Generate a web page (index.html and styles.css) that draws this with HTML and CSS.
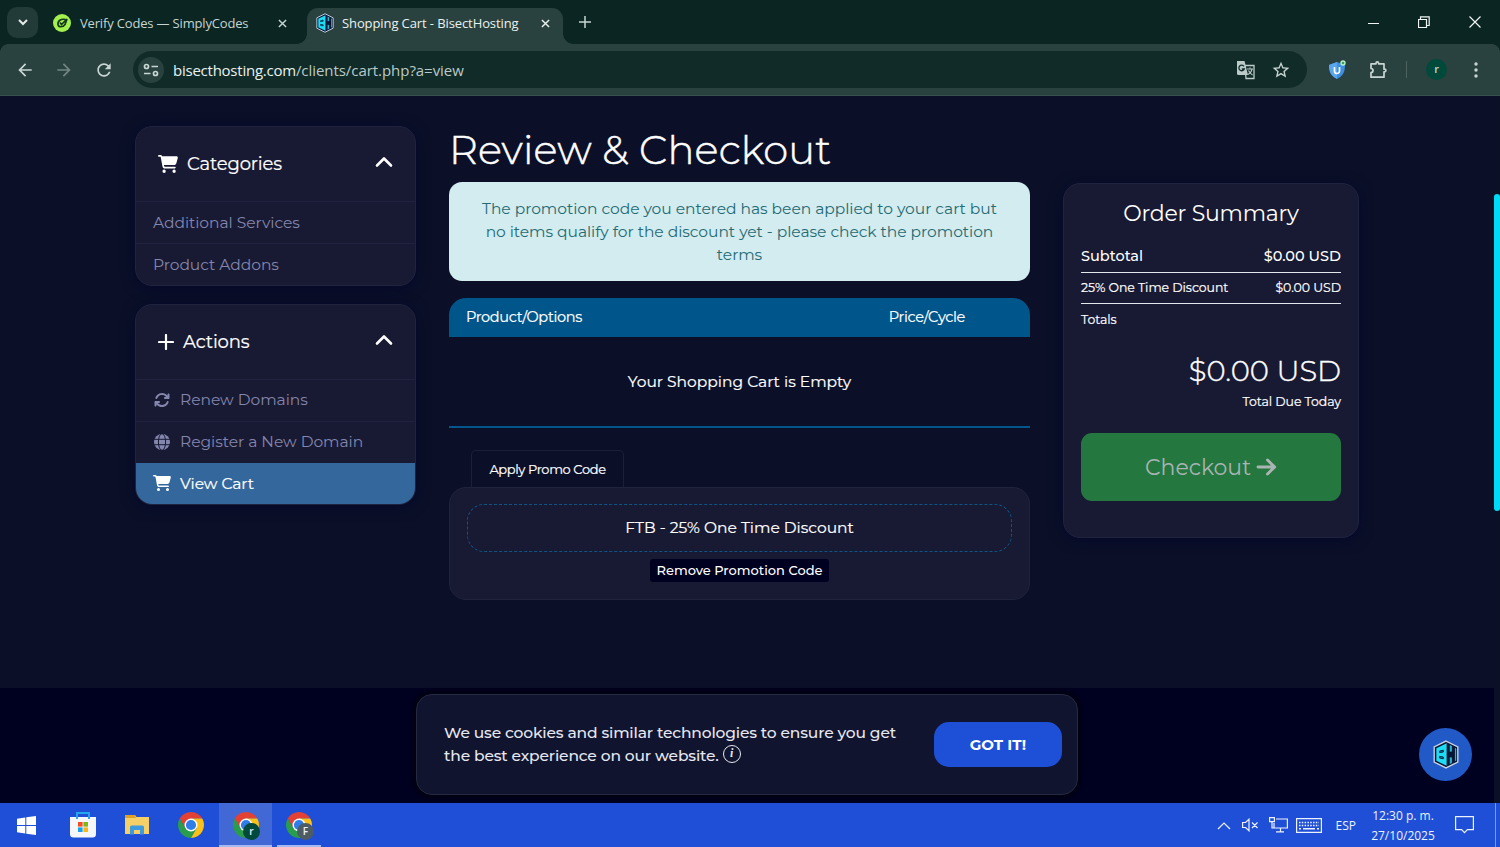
FILE: index.html
```html
<!DOCTYPE html>
<html lang="en">
<head>
    <meta charset="UTF-8">
    <meta name="viewport" content="width=device-width, initial-scale=1.0">
    <title>Shopping Cart - BisectHosting</title>
    <link rel="stylesheet" href="styles.css">
</head>
<body>
    <svg class="sprite" aria-hidden="true">
        <symbol id="cart" viewBox="0 0 576 512"><path d="M0 24C0 10.7 10.7 0 24 0H69.5c22 0 41.5 12.8 50.6 32h411c26.3 0 45.5 25 38.6 50.4l-41 152.3c-8.5 31.4-37 53.3-69.5 53.3H170.7l5.4 28.5c2.2 11.3 12.1 19.5 23.6 19.5H488c13.3 0 24 10.7 24 24s-10.7 24-24 24H199.7c-34.6 0-64.3-24.6-70.7-58.5L77.4 54.5c-.7-3.8-4-6.5-7.9-6.5H24C10.7 48 0 37.3 0 24zM128 464a48 48 0 1 1 96 0 48 48 0 1 1 -96 0zm336-48a48 48 0 1 1 0 96 48 48 0 1 1 0-96z"/></symbol>
        <symbol id="chevron" viewBox="0 0 18 12"><path d="M2 9.5l7-7 7 7" fill="none" stroke="currentColor" stroke-width="2.6" stroke-linecap="round" stroke-linejoin="round"/></symbol>
        <symbol id="close" viewBox="0 0 10 10"><path d="M1 1l8 8M9 1L1 9" fill="none" stroke="currentColor" stroke-width="1.6"/></symbol>
        <symbol id="back" viewBox="0 0 24 24"><path d="M20 11H7.83l5.59-5.59L12 4l-8 8 8 8 1.41-1.41L7.83 13H20v-2z"/></symbol>
        <symbol id="bisect" viewBox="0 0 24 27">
            <path d="M12 1l11 5.5v14L12 26 1 20.5v-14z" fill="#081634" stroke="#c4cfe0" stroke-width="1.3"/>
            <path d="M12.6 3L3 7.6v11.8l9.600 4.600z" fill="#1fdcf6"/>
            <path d="M6 10.300l3.500-.8v1.700l-3.500.5zM6 15.300l3.500.5v1.700L6 16.800z" fill="#1a6f90" stroke="#081634" stroke-width=".8"/>
            <path d="M15.500 4.700l2 1v5l-2 .3zM15.500 22.300l2-1v-5l-2-.3zM20.300 7.300l1.200.6v11.200l-1.200.6z" fill="#1fb6d6"/>
        </symbol>
        <symbol id="chrome" viewBox="0 0 24 24">
            <path d="M1.61 6A12 12 0 0 1 22.39 6H12L6.8 15z" fill="#e34133"/>
            <path d="M1.61 6A12 12 0 0 0 12 24l5.2-9H6.8z" fill="#2a9d4c"/>
            <path d="M12 24A12 12 0 0 0 22.39 6H12l5.2 9z" fill="#fbc116"/>
            <circle cx="12" cy="12" r="6" fill="#fff"/>
            <circle cx="12" cy="12" r="4.7" fill="#2f7de9"/>
        </symbol>
    </svg>

    <div class="tabs">
        <div class="tab-search"><svg width="10" height="7" viewBox="0 0 10 7"><path d="M1 1l4 4 4-4" fill="none" stroke="currentColor" stroke-width="2"/></svg></div>
        <div class="tab">
            <svg class="favicon" width="18" height="18" viewBox="0 0 18 18"><circle cx="9" cy="9" r="9" fill="#a3f04f"/><path d="M12.500 5.500C8 4.500 4.500 7 5 10.500c.5 3 5 3 7 0l2-5.500-5.500 5.500-1.500-2" fill="none" stroke="#123a1c" stroke-width="1.700"/></svg>
            <span class="tab-title verify">Verify Codes — SimplyCodes</span>
            <svg class="close" width="9" height="9"><use href="#close"/></svg>
        </div>
        <div class="tab active">
            <svg class="favicon" width="18" height="20"><use href="#bisect"/></svg>
            <span class="tab-title shopping">Shopping Cart - BisectHosting</span>
            <svg class="close" width="9" height="9"><use href="#close"/></svg>
        </div>
        <svg class="new-tab" width="12" height="12" viewBox="0 0 12 12"><path d="M6 0v12M0 6h12" stroke="currentColor" stroke-width="1.500"/></svg>
        <div class="window-buttons">
            <svg width="12" height="12" viewBox="0 0 12 12"><path d="M1 7.500h11" stroke="currentColor"/></svg>
            <svg width="12" height="12" viewBox="0 0 12 12"><path d="M.5 3.500h8v8h-8zM2.500 3V.8h8.700v8.700H9" fill="none" stroke="currentColor" stroke-width="1.200"/></svg>
            <svg width="12" height="12" viewBox="0 0 12 12"><path d="M.5.5l11 11M11.500.5l-11 11" stroke="currentColor" stroke-width="1.200"/></svg>
        </div>
    </div>

    <div class="toolbar">
        <svg class="nav-icon" width="20" height="20"><use href="#back"/></svg>
        <svg class="nav-icon forward" width="20" height="20"><use href="#back"/></svg>
        <svg class="nav-icon" width="20" height="20" viewBox="0 0 24 24"><path d="M17.650 6.350C16.200 4.900 14.210 4 12 4c-4.420 0-7.990 3.580-7.990 8s3.570 8 7.990 8c3.730 0 6.840-2.550 7.730-6h-2.080c-.82 2.330-3.040 4-5.650 4-3.310 0-6-2.690-6-6s2.690-6 6-6c1.660 0 3.140.69 4.220 1.780L13 11h7V4l-2.350 2.350z"/></svg>
        <div class="omnibox">
            <div class="site-info"><svg width="16" height="14" viewBox="0 0 16 14" stroke="currentColor" stroke-width="1.700"><circle cx="3.500" cy="3.500" r="2" fill="none"/><path d="M8.500 3.500H15M1 10.500h6.500"/><circle cx="12.500" cy="10.500" r="2" fill="none"/></svg></div>
            <div class="url"><span class="domain">bisecthosting.com</span>/clients/cart.php?a=view</div>
            <svg class="translate" width="20" height="20" viewBox="0 0 20 20">
                <path d="M9 5.500h9v13h-8z" fill="none" stroke="#bccbc8" stroke-width="1.300"/>
                <path d="M1 1h7.500l3.500 14H2.500A1.500 1.500 0 0 1 1 13.500z" fill="#bccbc8"/>
                <path d="M8 6.300A2.800 2.800 0 1 0 8.300 9H5.800" fill="none" stroke="#112b29" stroke-width="1.300"/>
                <path d="M11 9h6M14 7.500V9M16 9c-.5 3-2 4.500-4 5.500M12.500 10.500c1 2 2.500 3.500 4 4.500" fill="none" stroke="#bccbc8" stroke-width="1.100"/>
            </svg>
            <svg class="star" width="20" height="20" viewBox="0 0 24 24"><path d="M22 9.240l-7.190-.62L12 2 9.190 8.630 2 9.240l5.460 4.730L5.820 21 12 17.270 18.180 21l-1.630-7.030L22 9.240zM12 15.400l-3.760 2.270 1-4.280-3.320-2.880 4.380-.38L12 6.100l1.710 4.040 4.380.38-3.320 2.880 1 4.280L12 15.400z"/></svg>
        </div>
        <svg class="shield" width="18" height="20" viewBox="0 0 18 20"><path d="M8 2l8 3c0 7-2 11-8 14C2 16 0 12 0 5z" fill="#3f8fe0"/><path d="M8 2v17C2 16 0 12 0 5z" fill="#5aa7ee"/><path d="M5.500 7v4a2.500 2.500 0 0 0 5 0V7" fill="none" stroke="#fff" stroke-width="1.700"/><circle cx="14" cy="3" r="2.700" fill="#b7efc9"/><circle cx="14" cy="3" r="1.300" fill="#37a067"/></svg>
        <svg class="puzzle" width="20" height="20" viewBox="0 0 20 20"><path d="M3 3.800h5v-.6a1.300 1.300 0 0 1 2.600 0v.6H16v5.400h.6a1.300 1.300 0 0 1 0 2.600H16v5.400H3v-4.700a2 2 0 0 0 0-4z" fill="none" stroke="currentColor" stroke-width="1.700" stroke-linejoin="round"/></svg>
        <span class="divider"></span>
        <span class="profile">r</span>
        <svg class="more" width="4" height="16" viewBox="0 0 4 16"><circle cx="2" cy="2" r="1.700"/><circle cx="2" cy="8" r="1.700"/><circle cx="2" cy="14" r="1.700"/></svg>
    </div>

    <div class="page">
        <main class="content">
            <aside class="sidebar">
                <div class="card">
                    <div class="card-header">
                        <svg width="20" height="18"><use href="#cart"/></svg>
                        <span class="card-title categories">Categories</span>
                        <svg class="toggle" width="18" height="12"><use href="#chevron"/></svg>
                    </div>
                    <a class="item services">Additional Services</a>
                    <a class="item addons">Product Addons</a>
                </div>
                <div class="card">
                    <div class="card-header">
                        <svg width="16" height="16" viewBox="0 0 16 16"><path d="M8 1v14M1 8h14" stroke="currentColor" stroke-width="2.200" stroke-linecap="round"/></svg>
                        <span class="card-title">Actions</span>
                        <svg class="toggle" width="18" height="12"><use href="#chevron"/></svg>
                    </div>
                    <a class="item action">
                        <svg width="18" height="16" viewBox="0 0 512 512"><path d="M105.100 202.600c7.700-21.800 20.200-42.300 37.800-59.800c62.500-62.500 163.800-62.500 226.300 0L386.300 160H352c-17.700 0-32 14.300-32 32s14.300 32 32 32H463.900c17.700 0 32-14.300 32-32V80c0-17.700-14.300-32-32-32s-32 14.300-32 32v35.200L414.400 97.600c-87.500-87.500-229.300-87.500-316.800 0C73.200 122 55.600 150.700 44.800 181.400c-5.900 16.700 2.900 34.900 19.500 40.800s34.900-2.900 40.800-19.500zM39 289.300c-5 1.500-9.800 4.200-13.700 8.200c-4 4-6.700 8.800-8.100 14c-.3 1.200-.6 2.500-.8 3.800c-.3 1.700-.4 3.400-.4 5.100V432c0 17.700 14.300 32 32 32s32-14.300 32-32V396.900l17.600 17.500c87.500 87.400 229.300 87.400 316.700 0c24.400-24.400 42.100-53.100 52.900-83.700c5.900-16.700-2.900-34.900-19.500-40.800s-34.900 2.900-40.800 19.500c-7.700 21.800-20.200 42.300-37.800 59.800c-62.500 62.500-163.800 62.500-226.300 0L125.600 352H160c17.700 0 32-14.300 32-32s-14.300-32-32-32H48.400z"/></svg>
                        Renew Domains
                    </a>
                    <a class="item action">
                        <svg width="18" height="16" viewBox="0 0 16 16"><circle cx="8" cy="8" r="8"/><path d="M0 5.300h16M0 10.700h16" stroke="#181a33"/><ellipse cx="8" cy="8" rx="3.600" ry="8.300" fill="none" stroke="#181a33"/></svg>
                        Register a New Domain
                    </a>
                    <a class="item action selected">
                        <svg width="18" height="16"><use href="#cart"/></svg>
                        View Cart
                    </a>
                </div>
            </aside>

            <section class="checkout">
                <h1>Review &amp; Checkout</h1>
                <div class="alert">
                    <span>The promotion code you entered has been applied to your cart but</span><br>
                    <span>no items qualify for the discount yet - please check the promotion</span><br>
                    <span>terms</span>
                </div>
                <div class="table-header">
                    <span>Product/Options</span>
                    <span>Price/Cycle</span>
                </div>
                <div class="empty">Your Shopping Cart is Empty</div>
                <div class="promo-tab">Apply Promo Code</div>
                <div class="promo">
                    <div class="promo-code">FTB - 25% One Time Discount</div>
                    <a class="remove">Remove Promotion Code</a>
                </div>
            </section>

            <aside class="summary">
                <h2>Order Summary</h2>
                <div class="row subtotal"><span>Subtotal</span><span>$0.00 USD</span></div>
                <div class="row discount"><span>25% One Time Discount</span><span>$0.00 USD</span></div>
                <div class="row"><span>Totals</span></div>
                <div class="amount">$0.00 USD</div>
                <div class="due">Total Due Today</div>
                <a class="checkout-button">
                    <span>Checkout</span>
                    <svg width="21" height="20" viewBox="0 0 21 20"><path d="M2 10h16.500M11.500 3l7.200 7-7.200 7" fill="none" stroke="currentColor" stroke-width="2.900" stroke-linecap="round" stroke-linejoin="round"/></svg>
                </a>
            </aside>
        </main>
        <footer></footer>

        <div class="scrollbar"></div>
        <div class="cookies">
            <p><span>We use cookies and similar technologies to ensure you get</span><br><span>the best experience on our website.</span> <span class="info">i</span></p>
            <a class="got-it">GOT IT!</a>
        </div>
        <div class="chat"><svg width="26" height="29"><use href="#bisect"/></svg></div>
    </div>

    <div class="taskbar">
        <div class="task start"><svg width="19" height="19" viewBox="0 0 19 19"><path d="M0 2.800l8.300-1.300v7.600H0zM9.300 1.300L19 0v9.100H9.300zM0 10h8.300v7.600L0 16.300zM9.300 10H19v9l-9.700-1.300z" fill="#fff"/></svg></div>
        <div class="task"><svg width="26" height="26" viewBox="0 0 26 26"><path d="M0 5h26v17a3.500 3.500 0 0 1-3.500 3.500h-19A3.500 3.500 0 0 1 0 22z" fill="#f4f6fa"/><path d="M7 7V1h12v6" fill="none" stroke="#23a6ee" stroke-width="2"/><path d="M8 10h4.600v4.600H8z" fill="#f04e27"/><path d="M13.400 10H18v4.600h-4.600z" fill="#7cb816"/><path d="M8 15.400h4.600V20H8z" fill="#1ba1e8"/><path d="M13.400 15.400H18V20h-4.600z" fill="#fcb714"/></svg></div>
        <div class="task"><svg width="24" height="20" viewBox="0 0 24 20"><path d="M0 0h10l1.500 2H24v17H0z" fill="#f6d067"/><path d="M0 0h10l1 3H0z" fill="#e0a224"/><path d="M5 19.500V12a1.500 1.500 0 0 1 1.500-1.500h11A1.500 1.500 0 0 1 19 12v7.500h-4V15H9v4.500z" fill="#3f9be0"/></svg></div>
        <div class="task"><svg width="26" height="26"><use href="#chrome"/></svg></div>
        <div class="task open current"><svg width="26" height="26"><use href="#chrome"/></svg><span class="user">r</span></div>
        <div class="task open"><svg width="26" height="26"><use href="#chrome"/></svg><span class="user gray">F</span></div>
        <div class="tray">
            <svg width="14" height="9" viewBox="0 0 14 9"><path d="M1 8l6-6 6 6" fill="none" stroke="currentColor" stroke-width="1.200"/></svg>
            <svg class="speaker" width="17" height="14" viewBox="0 0 17 14"><path d="M.6 4.500h3L7 1.200v11.600L3.600 9.500h-3zM10 4.500l5.500 5.500M15.500 4.500L10 10" fill="none" stroke="currentColor" stroke-width="1.200"/></svg>
            <svg class="network" width="19" height="16" viewBox="0 0 19 16"><path d="M7 2h11.400v9H5V6M11.500 11v3.500M7 14.800h8M.6.600h4.800v4H.6zM3 4.600V11h2" fill="none" stroke="currentColor" stroke-width="1.200"/></svg>
            <svg class="keyboard" width="26" height="15" viewBox="0 0 26 15"><path d="M.6.600h24.800v13.800H.6z" fill="none" stroke="currentColor" stroke-width="1.200"/><path d="M3 4.500h20M3 7.500h20" stroke="currentColor" stroke-width="1.500" stroke-dasharray="1.500 1.300"/><path d="M3 10.700h2M7 10.700h12M21 10.700h2" stroke="currentColor" stroke-width="1.500"/></svg>
            <span class="language">ESP</span>
            <div class="clock"><span>12:30 p. m.</span><span>27/10/2025</span></div>
            <svg class="notice" width="19" height="18" viewBox="0 0 19 18"><path d="M.6.600h17.800v13h-6L9.500 16.700l-2.900-3.100h-6z" fill="none" stroke="currentColor" stroke-width="1.200"/></svg>
            <span class="show-desktop"></span>
        </div>
    </div>
</body>
</html>
```

FILE: styles.css
```css
* {
    box-sizing: border-box;
}
body {
    margin: 0;
    height: 847px;
    overflow: hidden;
    display: flex;
    flex-direction: column;
    font-family: "Montserrat", "Inter", sans-serif;
    background-color: #0b1028;
    color: #fff;
}
svg {
    display: block;
    flex-shrink: 0;
    fill: currentColor;
}
span, a, h1, h2 {
    white-space: nowrap;
}
.sprite {
    position: absolute;
    width: 0;
    height: 0;
}

/* browser */
.tabs {
    height: 44px;
    display: flex;
    align-items: center;
    padding-left: 7px;
    background-color: #0a2522;
    color: #c5d5d2;
    font-family: "Open Sans", sans-serif;
    font-size: 13px;
}
.tab-search {
    width: 31px;
    height: 31px;
    border-radius: 10px;
    background-color: #233b38;
    display: flex;
    align-items: center;
    justify-content: center;
    color: #e2ecea;
}
.tab {
    width: 254px;
    height: 36px;
    margin-top: 8px;
    padding: 0 5px 6px 15px;
    display: flex;
    align-items: center;
}
.tab .close {
    margin-left: auto;
}
.tab-title {
    margin-left: 9px;
}
.verify {
    letter-spacing: -0.17px;
}
.shopping {
    letter-spacing: -0.1px;
}
.tab.active {
    position: relative;
    width: 256px;
    margin-left: 15px;
    padding-left: 9px;
    padding-right: 13px;
    border-radius: 11px 11px 0 0;
    background-color: #2a423f;
    color: #e8f2f0;
}
.tab.active .tab-title {
    margin-left: 8px;
}
.tab.active::before, .tab.active::after {
    content: "";
    position: absolute;
    bottom: 0;
    width: 10px;
    height: 10px;
}
.tab.active::before {
    left: -10px;
    background: radial-gradient(circle at 0 0, transparent 9.5px, #2a423f 10px);
}
.tab.active::after {
    right: -10px;
    background: radial-gradient(circle at 100% 0, transparent 9.5px, #2a423f 10px);
}
.new-tab {
    margin-left: 16px;
}
.window-buttons {
    margin-left: auto;
    margin-right: 19px;
    display: flex;
    gap: 39px;
    color: #f0f5f4;
}
.toolbar {
    height: 52px;
    display: flex;
    align-items: center;
    padding: 0 22px 0 15px;
    background: radial-gradient(circle at 8px 8px, #2a423f 7.5px, #0a2522 8px) 0 0 / 8px 8px no-repeat,
        radial-gradient(circle at 0 8px, #2a423f 7.5px, #0a2522 8px) 100% 0 / 8px 8px no-repeat,
        #2a423f;
    border-bottom: 1px solid #3a504d;
    color: #c8d6d3;
}
.nav-icon {
    margin-right: 20px;
}
.nav-icon:first-child {
    margin-right: 19px;
}
.nav-icon.forward {
    color: #728683;
    transform: scaleX(-1);
}
.omnibox {
    width: 1174px;
    height: 37px;
    margin-left: -1px;
    border-radius: 19px;
    background-color: #112b29;
    display: flex;
    align-items: center;
    padding: 0 16px 0 5px;
}
.site-info {
    width: 26px;
    height: 26px;
    border-radius: 50%;
    background-color: #2a423f;
    display: flex;
    align-items: center;
    justify-content: center;
}
.url {
    margin-left: 9px;
    font-family: "Open Sans", sans-serif;
    font-size: 15px;
    letter-spacing: -0.05px;
    color: #b9cac7;
}
.domain {
    letter-spacing: -0.24px;
    color: #e8f2f0;
}
.translate {
    margin-left: auto;
}
.star {
    margin-left: 15px;
}
.shield {
    margin-left: 22px;
}
.puzzle {
    margin-left: 21px;
}
.divider {
    width: 1px;
    height: 17px;
    margin-left: 18px;
    background-color: #4c635f;
}
.profile {
    width: 21px;
    height: 21px;
    margin-left: 19px;
    border-radius: 50%;
    background-color: #00493b;
    font: 600 11px/20px "Open Sans", sans-serif;
    text-align: center;
}
.more {
    margin-left: auto;
}

/* page */
.page {
    position: relative;
    height: 707px;
    display: flex;
    flex-direction: column;
}
.content {
    height: 592px;
    padding: 30px 0 0 135px;
    display: flex;
    align-items: flex-start;
    gap: 33px;
}
footer {
    flex: 1;
    background-color: #000020;
}
.sidebar {
    width: 281px;
    display: flex;
    flex-direction: column;
    gap: 18px;
}
.card, .summary {
    background-color: #181a33;
    border: 1px solid #20233d;
    border-radius: 17px;
    box-shadow: 0 2px 14px #05072a;
}
.card {
    overflow: hidden;
}
.card-header {
    height: 74px;
    padding: 0 22px;
    display: flex;
    align-items: center;
}
.card-title {
    margin-left: 9px;
    font-size: 18px;
    letter-spacing: -0.15px;
    -webkit-text-stroke: 0.2px;
}
.toggle {
    margin: 0 0 4px auto;
}
.item {
    height: 42px;
    padding-left: 17px;
    border-top: 1px solid #202340;
    display: flex;
    align-items: center;
    gap: 9px;
    color: #8486ad;
    font-size: 15.5px;
    letter-spacing: -0.04px;
}
.item.action {
    padding-bottom: 2px;
}
.item.selected {
    height: 41px;
    background-color: #34679b;
    border-color: #34679b;
    color: #fff;
    -webkit-text-stroke: 0.2px;
}

.checkout {
    width: 581px;
}
h1 {
    margin: 0;
    height: 56px;
    font-size: 40px;
    line-height: 48px;
    font-weight: 300;
    letter-spacing: 0.17px;
    -webkit-text-stroke: 0.5px;
}
.alert {
    height: 99px;
    padding: 15px 0;
    border-radius: 13px;
    background-color: #d2ecf0;
    color: #256a73;
    font-size: 15.5px;
    line-height: 23px;
    letter-spacing: -0.04px;
    text-align: center;
}
.table-header {
    height: 39px;
    margin-top: 17px;
    padding: 0 65px 1px 17px;
    border-radius: 17px 17px 0 0;
    background-color: #00558a;
    display: flex;
    align-items: center;
    justify-content: space-between;
    font-size: 14.5px;
    letter-spacing: -0.32px;
    -webkit-text-stroke: 0.2px;
}
.empty {
    height: 91px;
    padding-bottom: 1px;
    border-bottom: 2px solid #00558a;
    display: flex;
    align-items: center;
    justify-content: center;
    font-size: 15.5px;
    -webkit-text-stroke: 0.2px;
}
.promo-tab {
    width: 153px;
    height: 37px;
    margin: 22px 0 0 22px;
    border: 1px solid #1c1f38;
    border-bottom: none;
    border-radius: 5px 5px 0 0;
    display: flex;
    align-items: center;
    justify-content: center;
    font-size: 13px;
    letter-spacing: -0.37px;
    -webkit-text-stroke: 0.2px;
}
.promo {
    height: 113px;
    padding: 16px 17px;
    border: 1px solid #20233d;
    border-radius: 17px;
    background-color: #181a33;
    display: flex;
    flex-direction: column;
    align-items: center;
}
.promo-code {
    align-self: stretch;
    height: 48px;
    padding-bottom: 2px;
    border: 1px dashed #0b5687;
    border-radius: 17px;
    display: flex;
    align-items: center;
    justify-content: center;
    font-size: 15.5px;
    -webkit-text-stroke: 0.2px;
}
.remove {
    width: 179px;
    height: 23px;
    margin-top: 7px;
    border-radius: 3px;
    background-color: #000020;
    font-size: 13px;
    line-height: 23px;
    font-weight: 500;
    text-align: center;
}

.summary {
    width: 296px;
    height: 355px;
    margin-top: 57px;
    padding: 0 17px;
}
h2 {
    margin: 15px 0 0;
    font-size: 22px;
    line-height: 30px;
    font-weight: 400;
    letter-spacing: -0.23px;
    text-align: center;
}
.row {
    height: 31px;
    display: flex;
    align-items: center;
    justify-content: space-between;
    font-size: 12.5px;
    letter-spacing: -0.06px;
    -webkit-text-stroke: 0.2px;
}
.row:not(.subtotal) {
    padding-bottom: 1px;
}
.subtotal {
    height: 34px;
    margin-top: 10px;
    font-size: 14.5px;
    font-weight: 500;
    letter-spacing: 0;
    -webkit-text-stroke: 0;
}
.subtotal, .discount {
    border-bottom: 1px solid #e4e6ee;
}
.amount {
    margin-top: 18px;
    font-size: 29px;
    line-height: 36px;
    font-weight: 300;
    text-align: right;
    -webkit-text-stroke: 0.4px;
}
.due {
    margin-top: 5px;
    font-size: 12.5px;
    line-height: 16px;
    letter-spacing: -0.06px;
    text-align: right;
    -webkit-text-stroke: 0.2px;
}
.checkout-button {
    height: 68px;
    margin-top: 23px;
    border-radius: 11px;
    background-color: #24773f;
    color: #a9b4b3;
    display: flex;
    align-items: center;
    justify-content: center;
    gap: 5px;
    font-size: 22px;
}

/* overlays */
.scrollbar {
    position: absolute;
    right: 0;
    top: 0;
    width: 6px;
    height: 707px;
    background-color: #0c1027;
}
.scrollbar::before {
    content: "";
    display: block;
    height: 317px;
    margin-top: 98px;
    border-radius: 3px;
    background-color: #00d9f7;
}
.cookies {
    position: absolute;
    left: 416px;
    top: 598px;
    width: 662px;
    height: 101px;
    padding: 0 15px 0 27px;
    border: 1px solid #262942;
    border-radius: 16px;
    background-color: #11142e;
    box-shadow: 0 0 5px 2px #02030c;
    display: flex;
    align-items: center;
    justify-content: space-between;
    font-weight: 500;
    font-size: 15.5px;
    line-height: 23px;
    letter-spacing: -0.16px;
    color: #e6e8f2;
}
.cookies p {
    margin: 0 0 1px;
}
.info {
    display: inline-block;
    width: 18px;
    height: 18px;
    border: 1.5px solid #e6e8f2;
    border-radius: 50%;
    font: italic bold 12px/14px "Liberation Serif", serif;
    text-align: center;
    vertical-align: 4px;
}
.got-it {
    width: 128px;
    height: 45px;
    border-radius: 15px;
    background-color: #1d4fd7;
    color: #fff;
    font-weight: 700;
    font-size: 15px;
    line-height: 45px;
    letter-spacing: 0;
    text-align: center;
}
.chat {
    position: absolute;
    right: 28px;
    top: 632px;
    width: 53px;
    height: 53px;
    border-radius: 50%;
    background-color: #2159c7;
    display: flex;
    align-items: center;
    justify-content: center;
}

/* taskbar */
.taskbar {
    height: 44px;
    display: flex;
    background-color: #1e4fd6;
    font-family: "Open Sans", sans-serif;
    font-size: 12px;
    color: #edf2ff;
}
.task {
    position: relative;
    width: 54px;
    display: flex;
    align-items: center;
    justify-content: center;
}
.task.start {
    width: 53px;
    margin-right: 3px;
}
.task.open {
    border-bottom: 2px solid #a5b9f0;
    width: 44px;
    margin-left: 5px;
    padding-top: 2px;
}
.task.current {
    width: 53px;
    margin-left: 1px;
    background-color: #4168d5;
}
.user {
    position: absolute;
    left: 24px;
    top: 20px;
    width: 17px;
    height: 17px;
    border-radius: 50%;
    background-color: #00493b;
    font-size: 10px;
    font-weight: 600;
    line-height: 16px;
    text-align: center;
}
.user.gray {
    left: 20px;
    background-color: #4c5b64;
}
.tray {
    margin-left: auto;
    display: flex;
    align-items: center;
}
.speaker {
    margin-left: 11px;
}
.network {
    margin-left: 10px;
}
.keyboard {
    margin-left: 8px;
}
.language {
    margin-left: 14px;
}
.clock {
    width: 66px;
    margin: 1px 0 0 14px;
    display: flex;
    flex-direction: column;
    align-items: center;
    line-height: 20px;
}
.notice {
    margin-left: 19px;
}
.show-desktop {
    width: 5px;
    height: 44px;
    margin-left: 21px;
    border-left: 1px solid #7f9be8;
}
```
